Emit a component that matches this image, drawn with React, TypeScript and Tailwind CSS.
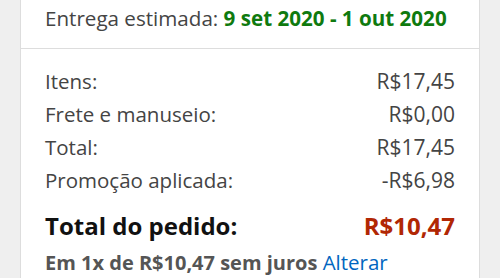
import React from 'react';

const rows = [
  { label: 'Itens:', value: 'R$17,45' },
  { label: 'Frete e manuseio:', value: 'R$0,00' },
  { label: 'Total:', value: 'R$17,45' },
  { label: 'Promoção aplicada:', value: '-R$6,98' },
];

export default function App() {
  return (
    <div className="h-[278px] w-[500px] overflow-hidden bg-[#efefef] px-[20px] font-['Open_Sans',sans-serif]">
      <div className="h-full border-x border-[#dddddd] bg-white">
        <div className="h-[48px] whitespace-nowrap px-[24px] pt-[3px] text-[20.6px] leading-[30px] text-[#444444]">
          Entrega estimada:{' '}
          <span className="font-bold text-[#0f7a0f]">9 set 2020 - 1 out 2020</span>
        </div>
        <div className="border-t border-[#dddddd] px-[24px] pt-[16px]">
          {rows.map((r) => (
            <div key={r.label} className="flex justify-between text-[20.5px] leading-[33px] text-[#444444]">
              <span>{r.label}</span>
              <span className="text-[21px]">{r.value}</span>
            </div>
          ))}
          <div className="mt-[12px] flex justify-between text-[24px] font-bold leading-[34px]">
            <span className="text-[#111111]">Total do pedido:</span>
            <span className="text-[#b12704]">R$10,47</span>
          </div>
          <div className="mt-[4px] text-[20px] leading-[30px] text-[#555555]">
            <span className="font-bold">Em 1x de R$10,47 sem juros</span>{' '}
            <span className="text-[20.5px] text-[#0066c0]">Alterar</span>
          </div>
        </div>
      </div>
    </div>
  );
}
